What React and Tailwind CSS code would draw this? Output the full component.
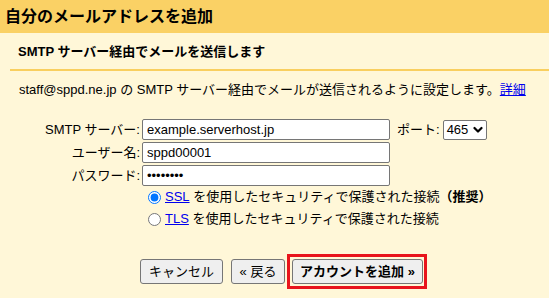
import React from "react";

const font = "font-['Liberation_Sans','Noto_Sans_CJK_JP',sans-serif]";

function Row({ label, children }) {
  return (
    <div className="flex items-center h-[21px]">
      <div className="w-[140px] text-right leading-[21px] whitespace-nowrap">{label}</div>
      {children}
    </div>
  );
}

function TextInput({ value, type = "text" }) {
  return (
    <input
      type={type}
      defaultValue={value}
      readOnly
      className="ml-[2px] w-[248px] h-[21px] bg-white border border-[#767676] rounded-[2px] px-[4px] text-[13px] text-black outline-none"
    />
  );
}

export default function App() {
  return (
    <div className={`w-[549px] h-[298px] bg-[#fff7d8] text-[13px] text-black overflow-hidden ${font}`}>
      <div className="h-[33px] bg-[#fad165] pl-[5px] flex items-center text-[16px] font-bold leading-none">
        自分のメールアドレスを追加
      </div>
      <div className="h-[36px] pl-[18px] flex items-center font-bold leading-none">
        SMTP サーバー経由でメールを送信します
      </div>
      <div className="ml-[10px] h-[2px] bg-[#f9cf5f]" />
      <div className="pl-[19px] pt-[10px] leading-[18px] whitespace-nowrap">
        staff@sppd.ne.jp の SMTP サーバー経由でメールが送信されるように設定します。
        <a className="text-[#0000ee] underline">詳細</a>
      </div>

      <div className="mt-[20px] flex flex-col gap-[2px]">
        <Row label="SMTP サーバー:">
          <TextInput value="example.serverhost.jp" />
          <span className="ml-[7px] leading-[21px]">ポート:</span>
          <div className="ml-[3px] w-[44px] h-[20px] bg-white border border-[#767676] rounded-[2px] flex items-center justify-between pl-[3px] pr-[3px]">
            <span className="leading-none text-[13px]">465</span>
            <svg width="10" height="8" viewBox="0 0 10 8">
              <polyline points="1.5,2 5,5.5 8.5,2" fill="none" stroke="#000" strokeWidth="2.2" strokeLinecap="round" strokeLinejoin="round" />
            </svg>
          </div>
        </Row>
        <Row label="ユーザー名:">
          <TextInput value="sppd00001" />
        </Row>
        <Row label="パスワード:">
          <TextInput value="password" type="password" />
        </Row>
      </div>

      <div className="flex flex-col">
        <label className="flex items-center h-[22px] pl-[148px] whitespace-nowrap">
          <input type="radio" name="sec" defaultChecked className="w-[13px] h-[13px] m-0 accent-[#0075ff]" />
          <a className="ml-[4px] text-[#0000ee] underline">SSL</a>
          <span>&nbsp;を使用したセキュリティで保護された接続</span>
          <span className="font-bold">（推奨）</span>
        </label>
        <label className="flex items-center h-[22px] pl-[148px] whitespace-nowrap">
          <input type="radio" name="sec" className="w-[13px] h-[13px] m-0" />
          <a className="ml-[4px] text-[#0000ee] underline">TLS</a>
          <span>&nbsp;を使用したセキュリティで保護された接続</span>
        </label>
      </div>

      <div className="mt-[24px] flex items-center pl-[140px]">
        <button className="w-[83px] h-[25px] flex items-center justify-center bg-[#efefef] border border-[#767676] rounded-[3px] leading-none whitespace-nowrap">
          キャンセル
        </button>
        <button className="ml-[8px] w-[54px] h-[25px] flex items-center justify-center bg-[#efefef] border border-[#767676] rounded-[3px] leading-none whitespace-nowrap">
          « 戻る
        </button>
        <div className="ml-[2px] border-[3px] border-[#e8141c] p-[2px] pr-[1px]">
          <button className="w-[131px] h-[25px] flex items-center justify-center bg-[#efefef] border border-[#767676] rounded-[3px] leading-none font-bold whitespace-nowrap">
            アカウントを追加 »
          </button>
        </div>
      </div>
    </div>
  );
}
